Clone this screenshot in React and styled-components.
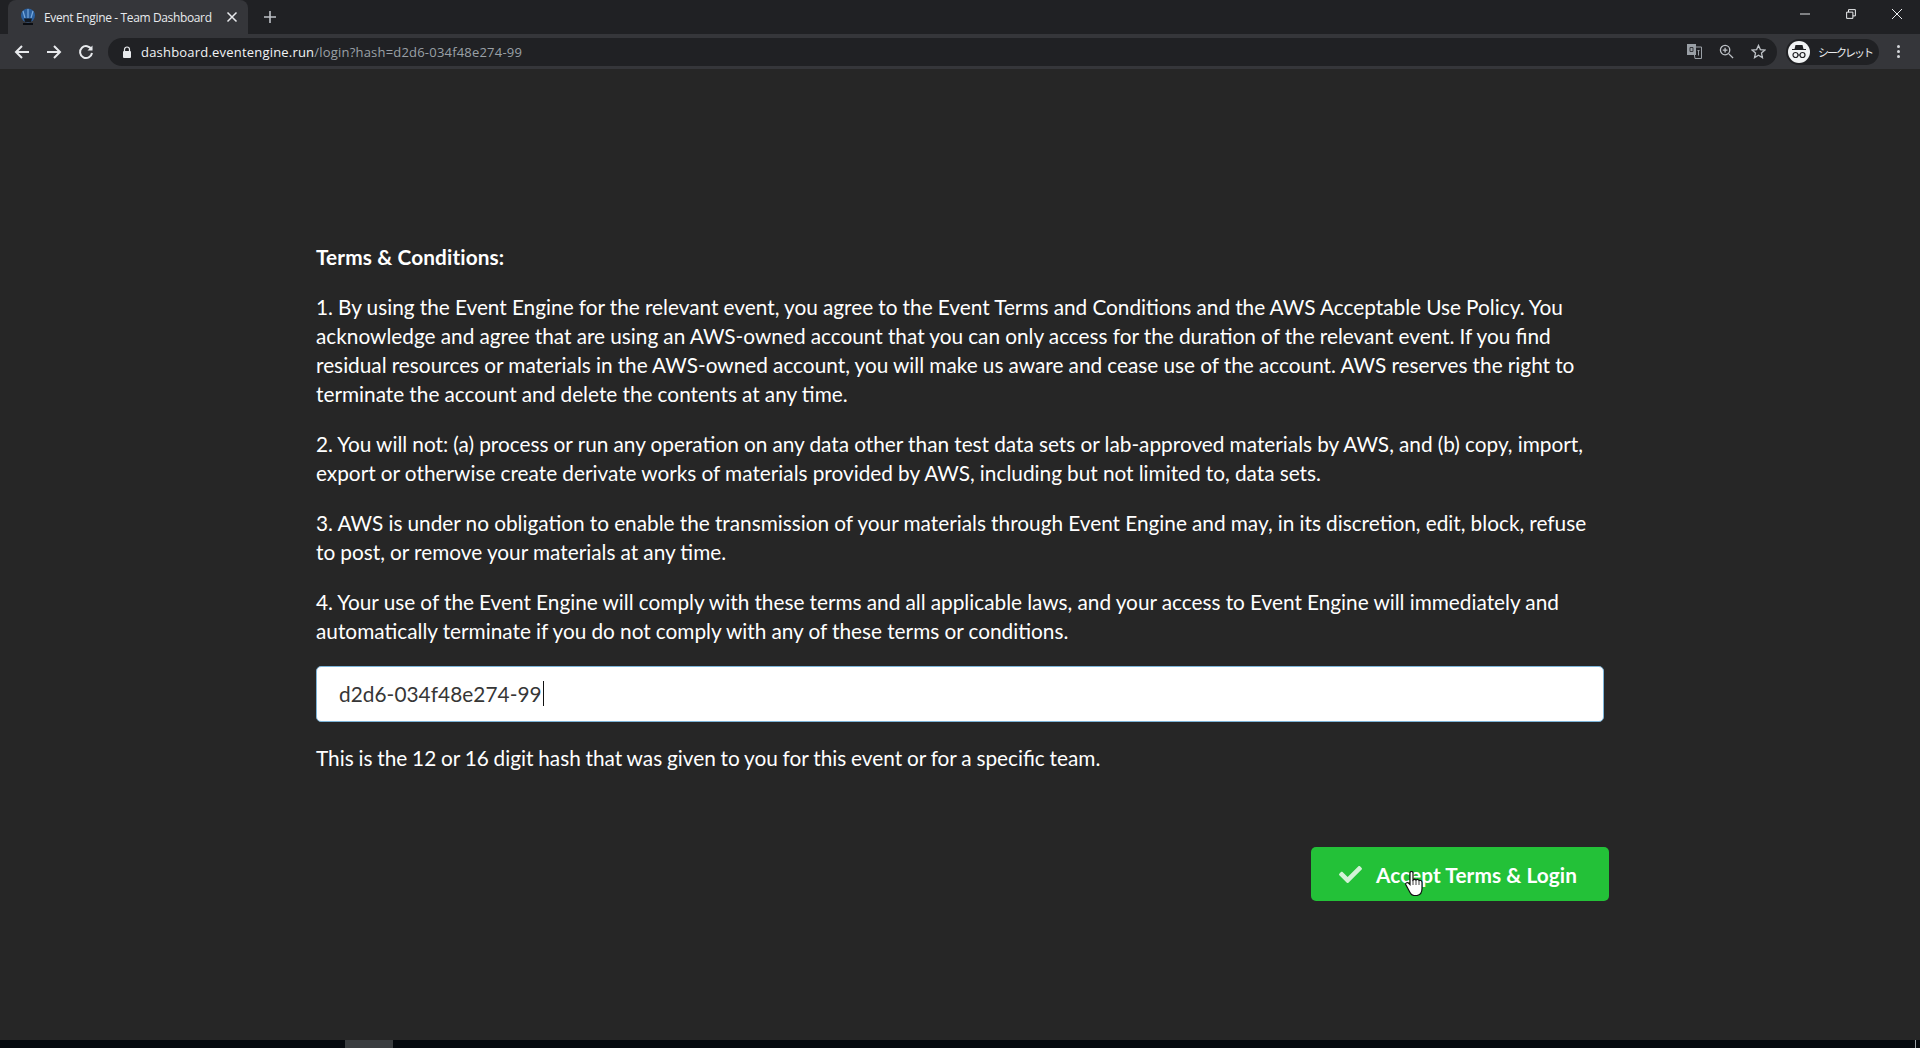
import React from 'react';
import styled, { createGlobalStyle } from 'styled-components';
import { FaCheck } from 'react-icons/fa';

const GlobalStyle = createGlobalStyle`
  html, body {
    margin: 0;
    padding: 0;
    height: 100%;
    background: #262626;
    overflow: hidden;
  }
  * {
    box-sizing: border-box;
  }
`;

const Screen = styled.div`
  width: 1920px;
  height: 1048px;
  display: flex;
  flex-direction: column;
  position: relative;
  overflow: hidden;
`;

const TabStrip = styled.div`
  height: 34px;
  background: #202124;
  display: flex;
  align-items: flex-end;
  padding-left: 8px;
  color: #e8eaed;
  font-family: "Open Sans", "Noto Sans", sans-serif;
`;

const Tab = styled.div`
  width: 240px;
  height: 34px;
  background: #35363a;
  border-radius: 8px 8px 0 0;
  display: flex;
  align-items: center;
  padding: 0 10px 0 12px;
  font-size: 12px;
  letter-spacing: -0.36px;
`;

const TabTitle = styled.span`
  margin-left: 8px;
  flex: 1;
  white-space: nowrap;
`;

const NewTab = styled.div`
  width: 16px;
  height: 16px;
  margin: 0 0 9px 14px;
  display: flex;
`;

const WindowControls = styled.div`
  margin-left: auto;
  height: 100%;
  display: flex;
  align-items: flex-start;
  gap: 36px;
  padding: 9px 18px 0 0;
`;

const Toolbar = styled.div`
  height: 35px;
  background: #35363a;
  display: flex;
  align-items: center;
  padding-left: 14px;
`;

const NavButton = styled.div`
  width: 16px;
  height: 16px;
  margin-right: 16px;
  display: flex;
`;

const Omnibox = styled.div`
  width: 1669px;
  height: 28px;
  margin-left: -2px;
  border-radius: 14px;
  background: #202124;
  display: flex;
  align-items: center;
  padding: 0 11px 0 14px;
  font-family: "Open Sans", "Noto Sans", sans-serif;
  font-size: 13px;
  letter-spacing: 0.2px;
  white-space: nowrap;
`;

const UrlHost = styled.span`
  color: #f1f3f4;
  margin-left: 9px;
`;

const UrlRest = styled.span`
  color: #9aa0a6;
`;

const OmniIcons = styled.div`
  margin-left: auto;
  display: flex;
  align-items: center;
  gap: 17px;
`;

const Profile = styled.div`
  width: 93px;
  height: 26px;
  margin-left: 9px;
  border-radius: 13px;
  background: #202124;
  display: flex;
  align-items: center;
  padding-left: 2px;
  color: #e8eaed;
  font-family: "Noto Sans CJK JP", sans-serif;
  font-size: 11px;
  letter-spacing: -2px;
  white-space: nowrap;
`;

const Avatar = styled.div`
  width: 22px;
  height: 22px;
  border-radius: 50%;
  background: #f1f3f4;
  display: flex;
  align-items: center;
  justify-content: center;
  margin-right: 8px;
`;

const Dots = styled.div`
  width: 4px;
  margin-left: 18px;
  display: flex;
  flex-direction: column;
  gap: 2px;

  i {
    width: 3px;
    height: 3px;
    border-radius: 50%;
    background: #d5d7da;
  }
`;

const Page = styled.main`
  flex: 1;
  background: #262626;
  display: flex;
  flex-direction: column;
  align-items: center;
  padding-top: 173px;
  color: #fff;
  font-family: Lato, sans-serif;
  font-size: 20.8px;
  line-height: 29.12px;
`;

const Content = styled.div`
  width: 1288px;
`;

const Title = styled.p`
  margin: 0 0 20.8px;
  font-weight: 700;
  letter-spacing: 0.12px;
`;

const Paragraph = styled.p`
  margin: 0 0 20.8px;
  word-spacing: -0.2px;
`;

const HashHint = styled(Paragraph)`
  word-spacing: -0.55px;
`;

const HashField = styled.div`
  height: 56px;
  margin-bottom: 21px;
  padding: 0 0 2px 22px;
  background: #fff;
  border: 1px solid #7db4d8;
  border-radius: 5px;
  display: flex;
  align-items: center;
  color: #363636;
  font-size: 20.8px;
  letter-spacing: 0.05px;
`;

const Caret = styled.span`
  width: 1px;
  height: 25px;
  margin-left: 1px;
  background: #111;
`;

const ButtonRow = styled.div`
  width: 1298px;
  margin-top: 54px;
  display: flex;
  justify-content: flex-end;
`;

const AcceptButton = styled.button`
  width: 298px;
  height: 54px;
  border: none;
  border-radius: 5px;
  background: #23c138;
  color: #fff;
  font-family: Lato, sans-serif;
  font-size: 20.8px;
  font-weight: 700;
  letter-spacing: 0.08px;
  display: flex;
  align-items: center;
  padding: 0 0 0 28px;

  svg {
    width: 23px;
    height: 23px;
    margin-right: 14px;
    opacity: 0.8;
  }
`;

const Pointer = styled.svg`
  position: absolute;
  left: 1405px;
  top: 871px;
  width: 18px;
  height: 25px;
`;

const Taskbar = styled.div`
  height: 8px;
  background: #05090e;
  display: flex;
  position: relative;
  padding-left: 345px;
`;

const TaskThumb = styled.div`
  width: 48px;
  background: #3a3d40;
`;

const Clock = styled.span`
  position: absolute;
  left: 1819px;
  top: 6px;
  color: #e8e8e8;
  font-family: "Open Sans", sans-serif;
  font-size: 11px;
  line-height: 14px;
`;

const DesktopEdge = styled.div`
  position: absolute;
  left: 1915px;
  top: 0;
  width: 1px;
  height: 8px;
  background: #9aa0a6;
`;

const Favicon = () => (
  <svg width="16" height="18" viewBox="0 0 16 18">
    <circle cx="8" cy="7.500" r="7" fill="#2a5f9e" />
    <path d="M3 3l2 7M8 1v9M13 3l-2 7" stroke="#78a9dc" strokeWidth="1.200" />
    <path d="M4 10.500h8l-1 3.500H5z" fill="#141a22" />
    <path d="M3 15h10v2H3z" fill="#0a0d12" />
  </svg>
);

const Stroke = ({ children, size = 16, color = '#e8eaed', width = 2 }) => (
  <svg width={size} height={size} viewBox="0 0 16 16" fill="none" stroke={color} strokeWidth={width}>
    {children}
  </svg>
);

const App = () => {
  return (
    <Screen>
      <GlobalStyle />
      <TabStrip>
        <Tab>
          <Favicon />
          <TabTitle>Event Engine - Team Dashboard</TabTitle>
          <Stroke size={12} width={2}>
            <path d="M2 2l12 12M14 2L2 14" />
          </Stroke>
        </Tab>
        <NewTab>
          <Stroke size={16} width={1.6} color="#bdc1c6">
            <path d="M8 2v12M2 8h12" />
          </Stroke>
        </NewTab>
        <WindowControls>
          <Stroke size={10} width={1.5} color="#eceef0">
            <path d="M0 8h16" />
          </Stroke>
          <Stroke size={10} width={1.6} color="#eceef0">
            <path d="M1 5h10v10H1zM4 5V1h11v10h-4" />
          </Stroke>
          <Stroke size={10} width={1.6} color="#eceef0">
            <path d="M0 0l16 16M16 0L0 16" />
          </Stroke>
        </WindowControls>
      </TabStrip>
      <Toolbar>
        <NavButton>
          <Stroke>
            <path d="M15 8H2M8 2L2 8l6 6" />
          </Stroke>
        </NavButton>
        <NavButton>
          <Stroke>
            <path d="M1 8h13M8 2l6 6-6 6" />
          </Stroke>
        </NavButton>
        <NavButton>
          <Stroke>
            <path d="M13.500 5.500A6 6 0 1 0 14 9" />
            <path d="M14.500 1.500v5h-5z" fill="#e8eaed" stroke="none" />
          </Stroke>
        </NavButton>
        <Omnibox>
          <svg width="10" height="12" viewBox="0 0 10 12">
            <path d="M2.500 5V3.500a2.500 2.500 0 0 1 5 0V5" fill="none" stroke="#e8eaed" strokeWidth="1.200" />
            <rect x="1" y="5" width="8" height="7" rx="1" fill="#e8eaed" />
          </svg>
          <UrlHost>dashboard.eventengine.run</UrlHost>
          <UrlRest>/login?hash=d2d6-034f48e274-99</UrlRest>
          <OmniIcons>
            <svg width="15" height="15" viewBox="0 0 15 15">
              <path d="M6 3h8.500v11.500H8z" fill="none" stroke="#9aa0a6" />
              <rect x="0" y="0" width="9" height="11" fill="#9aa0a6" />
              <path d="M3 3.500h3v4H3z" fill="none" stroke="#35363a" />
              <path d="M10.500 6.500h2M11.500 6.500v5" stroke="#9aa0a6" fill="none" />
            </svg>
            <Stroke size={15} width={1.4} color="#bdc1c6">
              <circle cx="6.500" cy="6.500" r="5" />
              <path d="M10.500 10.500l4.500 4.500M6.500 4v5M4 6.500h5" />
            </Stroke>
            <Stroke size={15} width={1.4} color="#bdc1c6">
              <path d="M8 1.500l2 4.500 4.800.500-3.600 3.200 1 4.800L8 12l-4.200 2.500 1-4.800L1.200 6.500 6 6z" />
            </Stroke>
          </OmniIcons>
        </Omnibox>
        <Profile>
          <Avatar>
            <svg width="16" height="14" viewBox="0 0 16 14">
              <path d="M4.500 0h7l1 4H15v1H1V4h2.500z" fill="#202124" />
              <circle cx="4.500" cy="10" r="2.500" fill="none" stroke="#202124" strokeWidth="1.200" />
              <circle cx="11.500" cy="10" r="2.500" fill="none" stroke="#202124" strokeWidth="1.200" />
              <path d="M7 10h2" stroke="#202124" />
            </svg>
          </Avatar>
          シークレット
        </Profile>
        <Dots>
          <i />
          <i />
          <i />
        </Dots>
      </Toolbar>
      <Page>
        <Content>
          <Title>Terms &amp; Conditions:</Title>
          <Paragraph>
            1. By using the Event Engine for the relevant event, you agree to the Event Terms and Conditions and the AWS
            Acceptable Use Policy. You acknowledge and agree that are using an AWS-owned account that you can only access
            for the duration of the relevant event. If you find residual resources or materials in the AWS-owned account,
            you will make us aware and cease use of the account. AWS reserves the right to terminate the account and
            delete the contents at any time.
          </Paragraph>
          <Paragraph>
            2. You will not: (a) process or run any operation on any data other than test data sets or lab-approved
            materials by AWS, and (b) copy, import, export or otherwise create derivate works of materials provided by
            AWS, including but not limited to, data sets.
          </Paragraph>
          <Paragraph>
            3. AWS is under no obligation to enable the transmission of your materials through Event Engine and may, in
            its discretion, edit, block, refuse to post, or remove your materials at any time.
          </Paragraph>
          <Paragraph>
            4. Your use of the Event Engine will comply with these terms and all applicable laws, and your access to Event
            Engine will immediately and automatically terminate if you do not comply with any of these terms or
            conditions.
          </Paragraph>
          <HashField>
            d2d6-034f48e274-99
            <Caret />
          </HashField>
          <HashHint>This is the 12 or 16 digit hash that was given to you for this event or for a specific team.</HashHint>
        </Content>
        <ButtonRow>
          <AcceptButton>
            <FaCheck />
            Accept Terms &amp; Login
          </AcceptButton>
        </ButtonRow>
      </Page>
      <Pointer viewBox="0 0 18 25">
        <path
          d="M5 2c0-2 3-2 3 0v7c1-1 2-1 3 0 1-1 2-1 3 .500 1-.500 3 0 3 2v6c0 4-2 6.500-5 7H9c-2 0-3-1-4-3L1 14c-1-2 1-3 2.500-2L5 13.500z"
          fill="#fff"
          stroke="#111"
          strokeWidth="1.200"
        />
        <path d="M8 9v5M11 9v5M14 10v4" stroke="#111" strokeWidth="0.800" fill="none" />
      </Pointer>
      <Taskbar>
        <TaskThumb />
        <Clock>11:22</Clock>
        <DesktopEdge />
      </Taskbar>
    </Screen>
  );
};

export default App;
